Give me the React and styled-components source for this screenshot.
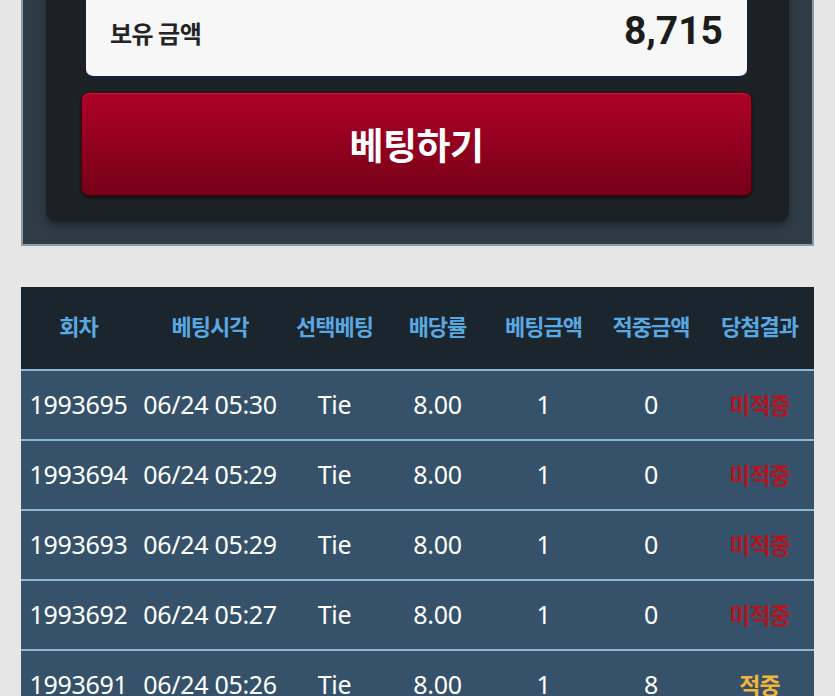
import React from 'react';
import styled, { createGlobalStyle } from 'styled-components';

// Base page styles
const GlobalStyle = createGlobalStyle`
  html, body {
    margin: 0;
    padding: 0;
    background: #e6e6e6;
    font-family: "Noto Sans", "Noto Sans CJK KR", sans-serif;
  }
`;

const Page = styled.div`
  padding: 0 21px 40px;
  overflow: hidden;
`;

// Outer slate panel holding the betting card
const Panel = styled.div`
  margin-top: -72px;
  background: #2f3c46;
  border: 2px solid #8d9ba7;
  border-top: none;
  padding: 23px 23px 22px;
`;

// Dark inner card
const Card = styled.div`
  background: #1c2125;
  border-radius: 10px;
  box-shadow: 0 4px 8px rgba(0, 0, 0, 0.35);
  padding: 35px 37px 26px 35px;
  display: flex;
  flex-direction: column;
  gap: 14px;
`;

// White balance box
const Balance = styled.div`
  margin: 0 5px;
  height: 92px;
  box-sizing: border-box;
  background: #f7f7f7;
  border-radius: 8px;
  border-bottom: 2px solid #13203f;
  padding: 0 24px;
  display: flex;
  align-items: center;
  justify-content: space-between;
`;

const BalanceLabel = styled.span`
  font-family: "Noto Sans CJK KR", sans-serif;
  font-weight: 700;
  font-size: 24px;
  color: #242424;
  letter-spacing: -0.5px;
  margin-top: 2px;
`;

const BalanceValue = styled.span`
  font-family: Roboto, "Liberation Sans", sans-serif;
  font-weight: 700;
  font-size: 39px;
  color: #1c1c1c;
`;

// Red bet button
const BetButton = styled.button`
  height: 104px;
  border: 1px solid #4e000c;
  border-radius: 8px;
  background: linear-gradient(180deg, #ac0228 0%, #950020 45%, #760017 100%);
  box-shadow: inset 0 1px 0 rgba(255, 120, 140, 0.25), 0 2px 3px rgba(0, 0, 0, 0.5);
  color: #ffffff;
  font-family: "Noto Sans CJK KR", sans-serif;
  font-weight: 700;
  font-size: 37px;
  letter-spacing: -0.5px;
  cursor: pointer;
  padding: 0;
`;

// History table
const Table = styled.table`
  margin-top: 41px;
  width: 100%;
  border-collapse: collapse;
  table-layout: fixed;
`;

const HeadCell = styled.th`
  height: 76px;
  padding: 0 0 6px;
  background: #1b252d;
  color: #5aa8e2;
  font-family: "Noto Sans CJK KR", sans-serif;
  font-weight: 700;
  font-size: 22px;
  letter-spacing: -1px;
  text-align: center;
  width: ${(p) => p.$w}px;
`;

const Row = styled.tr`
  border-top: 2px solid #8db6d4;
  background: #35526a;
`;

const Cell = styled.td`
  height: 66px;
  padding: 0 0 2px;
  text-align: center;
  color: #ffffff;
  font-family: "Noto Sans", sans-serif;
  font-size: 25px;
  white-space: nowrap;
  letter-spacing: -0.3px;
`;

const Result = styled(Cell)`
  font-family: "Noto Sans CJK KR", sans-serif;
  font-weight: 700;
  font-size: 23px;
  letter-spacing: -1px;
  color: ${(p) => (p.$win ? '#f0b53a' : '#b3141d')};
`;

const columns = [
  { label: '회차', w: 115 },
  { label: '베팅시각', w: 148 },
  { label: '선택베팅', w: 101 },
  { label: '배당률', w: 105 },
  { label: '베팅금액', w: 107 },
  { label: '적중금액', w: 108 },
  { label: '당첨결과', w: 109 },
];

const history = [
  { round: '1993695', time: '06/24 05:30', pick: 'Tie', odds: '8.00', bet: 1, won: 0 },
  { round: '1993694', time: '06/24 05:29', pick: 'Tie', odds: '8.00', bet: 1, won: 0 },
  { round: '1993693', time: '06/24 05:29', pick: 'Tie', odds: '8.00', bet: 1, won: 0 },
  { round: '1993692', time: '06/24 05:27', pick: 'Tie', odds: '8.00', bet: 1, won: 0 },
  { round: '1993691', time: '06/24 05:26', pick: 'Tie', odds: '8.00', bet: 1, won: 8 },
];

const App = () => (
  <>
    <GlobalStyle />
    <Page>
      <Panel>
        <Card>
          <Balance>
            <BalanceLabel>보유 금액</BalanceLabel>
            <BalanceValue>8,715</BalanceValue>
          </Balance>
          <BetButton>베팅하기</BetButton>
        </Card>
      </Panel>

      <Table>
        <thead>
          <tr>
            {columns.map((c) => (
              <HeadCell key={c.label} $w={c.w}>{c.label}</HeadCell>
            ))}
          </tr>
        </thead>
        <tbody>
          {history.map((h) => (
            <Row key={h.round}>
              <Cell>{h.round}</Cell>
              <Cell>{h.time}</Cell>
              <Cell>{h.pick}</Cell>
              <Cell>{h.odds}</Cell>
              <Cell>{h.bet}</Cell>
              <Cell>{h.won}</Cell>
              <Result $win={h.won > 0}>{h.won > 0 ? '적중' : '미적중'}</Result>
            </Row>
          ))}
        </tbody>
      </Table>
    </Page>
  </>
);

export default App;
